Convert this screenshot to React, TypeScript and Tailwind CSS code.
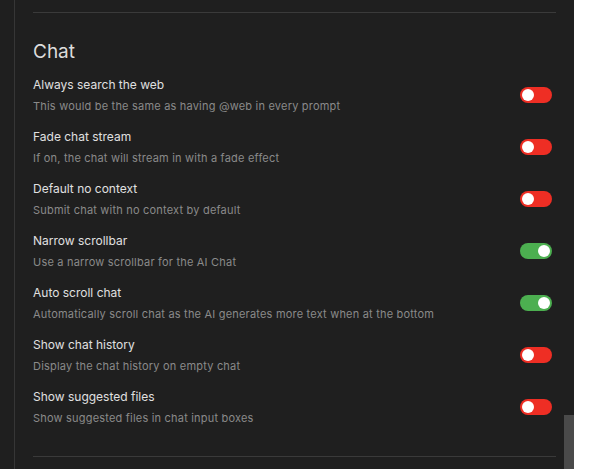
import React, { useState } from 'react';

interface Setting {
  key: string;
  title: string;
  description: string;
  enabled: boolean;
}

const SETTINGS: Setting[] = [
  { key: 'web', title: 'Always search the web', description: 'This would be the same as having @web in every prompt', enabled: false },
  { key: 'fade', title: 'Fade chat stream', description: 'If on, the chat will stream in with a fade effect', enabled: false },
  { key: 'context', title: 'Default no context', description: 'Submit chat with no context by default', enabled: false },
  { key: 'narrow', title: 'Narrow scrollbar', description: 'Use a narrow scrollbar for the AI Chat', enabled: true },
  { key: 'autoscroll', title: 'Auto scroll chat', description: 'Automatically scroll chat as the AI generates more text when at the bottom', enabled: true },
  { key: 'history', title: 'Show chat history', description: 'Display the chat history on empty chat', enabled: false },
  { key: 'suggested', title: 'Show suggested files', description: 'Show suggested files in chat input boxes', enabled: false },
];

const Toggle: React.FC<{ on: boolean; onChange: () => void }> = ({ on, onChange }) => (
  <button
    onClick={onChange}
    className={`flex items-center w-[32px] h-[16px] rounded-full px-[2px] shrink-0 ${
      on ? 'bg-[#4caf50] justify-end' : 'bg-[#ee2e24] justify-start'
    }`}
  >
    <span className="block w-[12px] h-[12px] rounded-full bg-white" />
  </button>
);

export default function App() {
  const [values, setValues] = useState<Record<string, boolean>>(
    Object.fromEntries(SETTINGS.map((s) => [s.key, s.enabled]))
  );

  return (
    <div className="flex w-[591px] h-[469px] bg-white overflow-hidden" style={{ fontFamily: 'Inter, "Noto Sans", sans-serif' }}>
      <div className="flex w-[574px] h-full bg-[#1f1f1f]">
        {/* left gutter */}
        <div className="w-[14px] shrink-0" />
        <div className="flex-1 flex border-l border-[#363636]">
          {/* settings column */}
          <div className="w-[541px] pl-[18px] pt-[12px]">
            <div className="h-px bg-[#3a3a3a]" />
            <h2 className="mt-[25px] text-[19px] leading-[28px] text-[#dcdcdc]">Chat</h2>
            <div className="mt-[10px] flex flex-col gap-[14px] pr-[4px]">
              {SETTINGS.map((s) => (
                <div key={s.key} className="flex items-center justify-between">
                  <div className="flex flex-col gap-[4px]">
                    <span className="text-[12px] leading-[18px] text-[#e0e0e0]">{s.title}</span>
                    <span className="text-[11px] leading-[16px] tracking-[0.2px] text-[#8a8a8a]">{s.description}</span>
                  </div>
                  <Toggle on={values[s.key]} onChange={() => setValues((v) => ({ ...v, [s.key]: !v[s.key] }))} />
                </div>
              ))}
            </div>
            <div className="mt-[30px] h-px bg-[#3a3a3a]" />
          </div>
          {/* scrollbar */}
          <div className="ml-auto w-[10px] pt-[415px]">
            <div className="h-full bg-[#4a4a4a]" />
          </div>
        </div>
      </div>
    </div>
  );
}
